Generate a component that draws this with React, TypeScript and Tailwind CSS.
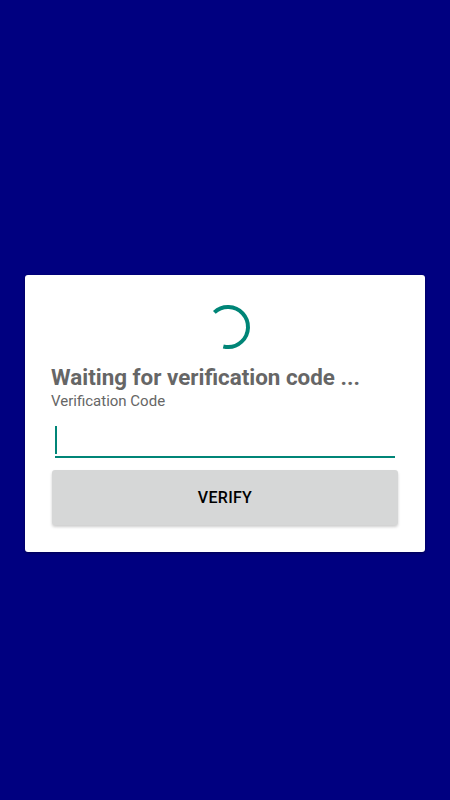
export default function App() {
  return (
    <div className="w-[450px] h-[800px] bg-[#000080] flex items-center justify-center pt-[27px] font-['Roboto','Liberation_Sans',sans-serif]">
      <div className="w-[400px] h-[277px] bg-white rounded-[3px] flex flex-col px-[26px] pt-[27px] shadow-[0_1px_3px_rgba(0,0,0,0.4)]">
        <div className="flex justify-center pl-[5px]">
          <svg width="50" height="50" viewBox="0 0 50 50">
            <circle
              cx="25"
              cy="25"
              r="20"
              fill="none"
              stroke="#008577"
              strokeWidth="4"
              strokeDasharray="82 200"
              transform="rotate(-133 25 25)"
            />
          </svg>
        </div>
        <h1 className="mt-[12px] text-[22.4px] leading-[26px] font-bold text-[#666666]">Waiting for verification code ...</h1>
        <p className="text-[15px] leading-[18px] text-[#666666] mt-[2px]">Verification Code</p>
        <div className="mt-[14px] ml-[4px] mr-[4px] h-[34px] border-b-2 border-[#008577] flex items-center">
          <div className="w-[2px] h-[28px] bg-[#008577]" />
        </div>
        <button className="mt-[12px] h-[55px] w-[346px] ml-[1px] bg-[#d6d7d7] rounded-[3px] shadow-[0_2px_3px_rgba(0,0,0,0.2)] text-[16px] font-medium text-black tracking-[0.3px]">
          VERIFY
        </button>
      </div>
    </div>
  );
}
